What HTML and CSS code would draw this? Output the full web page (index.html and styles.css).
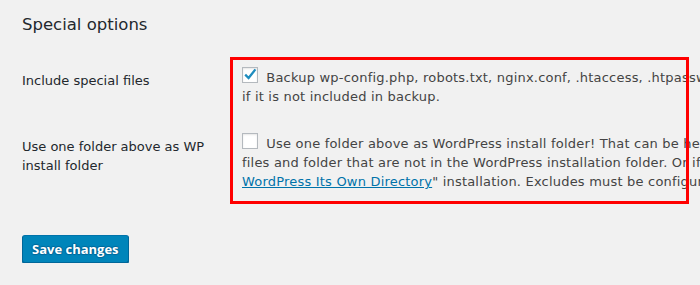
FILE: index.html
```html
<!doctype html>
<html lang="en">
<head>
    <meta charset="UTF-8">
    <meta name="viewport" content="width=device-width, initial-scale=1.0">
    <title>Special options</title>
    <link rel="stylesheet" href="styles.css">
</head>
<body>
<div class="wrap">
    <h2 class="title">Special options</h2>
    <div class="form-grid">
        <div class="field-label">Include special files</div>
        <div class="field">
            <label class="option">
                <span class="checkbox is-checked">
                    <svg viewBox="0 0 16 16" width="16" height="16"><path d="M3.2 7.6 L6.6 11 L13.4 2.4"/></svg>
                </span>
                Backup wp-config.php, robots.txt, nginx.conf, .htaccess, .htpasswd and favicon.ico from root<br>if it is not included in backup.
            </label>
        </div>

        <div class="field-label">Use one folder above as WP<br>install folder</div>
        <div class="field">
            <label class="option">
                <span class="checkbox"></span>
                Use one folder above as WordPress install folder! That can be helpful, if you would backup<br>files and folder that are not in the WordPress installation folder. Or if you made a "<a href="#">Giving<br>WordPress Its Own Directory</a>" installation. Excludes must be configured again.
            </label>
        </div>

        <!-- annotation box drawn over the option column -->
        <div class="highlight"></div>
    </div>
    <p class="submit"><button class="button-primary" type="button">Save changes</button></p>
</div>
</body>
</html>
```

FILE: styles.css
```css
html, body {
    margin: 0;
    padding: 0;
    background-color: #f1f1f1;
}

body {
    overflow: hidden;
    color: #444;
    font-family: "DejaVu Sans", "Noto Sans", sans-serif;
    font-size: 13px;
}

.wrap {
    padding: 14px 20px 0 22px;
}

.title {
    margin: 0 0 18px;
    font-size: 16.5px;
    font-weight: normal;
    line-height: 22px;
    color: #23282d;
}

.form-grid {
    position: relative;
    display: grid;
    grid-template-columns: 209px max-content;
}

.field-label {
    grid-column: 1;
    padding: 17px 10px 14px 0;
    line-height: 19px;
    color: #23282d;
}

.field {
    grid-column: 2;
    padding: 14px 0 14px 11px;
    line-height: 19px;
    letter-spacing: .2px;
    white-space: nowrap;
}

.option a {
    color: #0073aa;
}

.checkbox {
    display: inline-block;
    box-sizing: border-box;
    width: 16px;
    height: 16px;
    margin: -1px 4px 0 0;
    vertical-align: top;
    border: 1px solid #b4b9be;
    background-color: #fff;
    box-shadow: inset 0 1px 2px rgba(0, 0, 0, .1);
}

.checkbox svg {
    display: block;
    margin: -1px 0 0 -1px;
    overflow: visible;
}

.checkbox path {
    fill: none;
    stroke: #1e8cbe;
    stroke-width: 2.3;
}

/* red annotation frame over the whole option column */
.highlight {
    position: absolute;
    grid-column: 2;
    grid-row: 1 / 3;
    top: 3px;
    bottom: 1px;
    left: -1px;
    box-sizing: border-box;
    width: 459px;
    border: 3px solid #f00;
}

.submit {
    margin: 30px 0 0;
    padding: 0;
}

.button-primary {
    height: 28px;
    padding: 0 9px 1px;
    font-family: "Open Sans", "DejaVu Sans", sans-serif;
    font-size: 13px;
    font-weight: bold;
    line-height: 26px;
    color: #fff;
    background-color: #0085ba;
    border: 1px solid;
    border-color: #0073aa #006799 #006799;
    border-radius: 3px;
    box-shadow: 0 1px 0 #006799;
    text-shadow: 0 -1px 1px #006799, 1px 0 1px #006799, 0 1px 1px #006799, -1px 0 1px #006799;
    cursor: pointer;
}
```
